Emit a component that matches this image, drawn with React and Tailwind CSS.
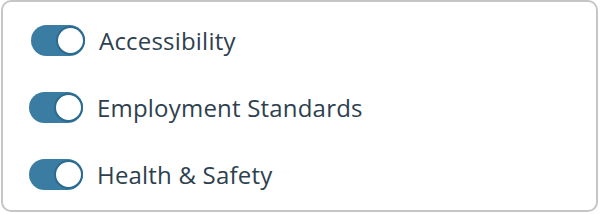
import React, { useState } from 'react';

const Toggle = ({ on, onClick }) => (
  <button
    onClick={onClick}
    className={`flex items-center w-[54px] h-[31px] rounded-full shrink-0 ${
      on ? 'justify-end bg-[#3a7ca2]' : 'justify-start bg-[#c9ced4]'
    }`}
  >
    <span
      className={`block w-[29px] h-[29px] rounded-full bg-white border-2 ${
        on ? 'border-[#2c6b90]' : 'border-[#b0b6bd]'
      }`}
    ></span>
  </button>
);

export default function App() {
  const [items, setItems] = useState([
    { label: 'Accessibility', on: true },
    { label: 'Employment Standards', on: true },
    { label: 'Health & Safety', on: true },
  ]);

  const flip = (i) =>
    setItems((prev) => prev.map((it, j) => (j === i ? { ...it, on: !it.on } : it)));

  return (
    <div className="w-[600px] h-[214px] bg-white">
      <div
        className="w-[597px] h-[212px] ml-px border-2 border-[#c6c6c6] rounded-[10px] pt-[23px] pl-[26px] flex flex-col gap-[36px]"
        style={{ fontFamily: '"Open Sans", Lato, sans-serif' }}
      >
        {items.map((it, i) => (
          <div key={it.label} className={`flex items-center gap-[14px] ${i === 0 ? 'ml-[2px]' : ''}`}>
            <Toggle on={it.on} onClick={() => flip(i)} />
            <span className="text-[24px] tracking-[0.2px] text-[#2e3f4f] leading-none">{it.label}</span>
          </div>
        ))}
      </div>
    </div>
  );
}
